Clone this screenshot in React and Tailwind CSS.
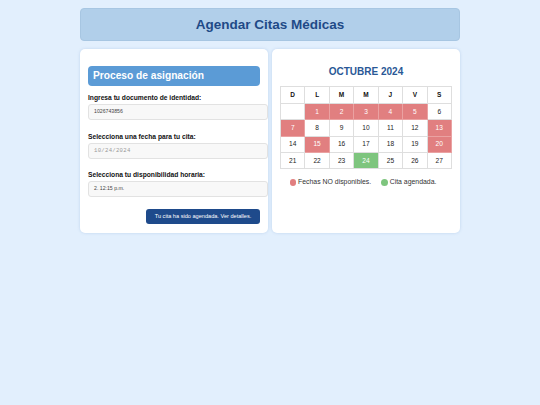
import React from 'react';

const dias = ['D', 'L', 'M', 'M', 'J', 'V', 'S'];

const semanas = [
	['', 1, 2, 3, 4, 5, 6],
	[7, 8, 9, 10, 11, 12, 13],
	[14, 15, 16, 17, 18, 19, 20],
	[21, 22, 23, 24, 25, 26, 27],
];

const noDisponibles = [1, 2, 3, 4, 5, 7, 13, 15, 20];
const agendada = 24;

function Campo({ label, value, mono, muted, className = '' }) {
	return (
		<div className={className}>
			<label className="block text-[6.7px] leading-[8px] font-bold text-[#111]">
				{label}
			</label>
			<div
				className={`mt-[2px] h-[16px] w-[180px] flex items-center pl-[5px] bg-[#f8f8f8] border border-[#e2e2e2] rounded-[3px] ${
					mono
						? "font-['Liberation_Mono',monospace] text-[5.6px] tracking-[0.3px]"
						: 'text-[5.2px]'
				} ${muted ? 'text-[#9a9a9a]' : 'text-[#444]'}`}>
				{value}
			</div>
		</div>
	);
}

export default function App() {
	return (
		<div className="min-h-[405px] bg-[#e2effd] font-['Liberation_Sans',Arial,sans-serif] pt-2">
			<div className="w-[380px] mx-auto">
				{/* Header */}
				<div className="h-[33px] rounded-[4px] bg-[#b1cfea] border border-[#a7c6e2] flex items-center justify-center pt-[2px]">
					<h1 className="text-[13.5px] font-bold text-[#1f4a87]">
						Agendar Citas Médicas
					</h1>
				</div>

				<div className="mt-2 flex gap-[4px]">
					{/* Formulario */}
					<div className="w-[188px] h-[184px] bg-white rounded-[5px] shadow-[0_0_3px_rgba(120,160,210,0.35)] pt-[17px] px-2 flex flex-col">
						<div className="h-[20px] rounded-[4px] bg-[#5b9bd6] flex items-center pl-[5px]">
							<span className="text-[10.2px] font-bold text-white">
								Proceso de asignación
							</span>
						</div>
						<Campo
							className="mt-[8px]"
							label="Ingresa tu documento de identidad:"
							value="1026743856"
						/>
						<Campo
							className="mt-[13px]"
							label="Selecciona una fecha para tu cita:"
							value="10/24/2024"
							mono
							muted
						/>
						<Campo
							className="mt-[12px]"
							label="Selecciona tu disponibilidad horaria:"
							value="2. 12:15 p.m."
						/>
						<button className="mt-[12px] self-end h-[15px] w-[114px] rounded-[3px] bg-[#1e4a8b] text-white text-[5.6px] flex items-center justify-center">
							Tu cita ha sido agendada. Ver detalles.
						</button>
					</div>

					{/* Calendario */}
					<div className="w-[188px] h-[184px] bg-white rounded-[5px] shadow-[0_0_3px_rgba(120,160,210,0.35)] pt-[17px] px-2">
						<h2 className="text-center text-[10px] leading-[12px] font-bold text-[#2a5896]">
							OCTUBRE 2024
						</h2>
						<div className="mt-[8px] grid grid-cols-7 border-t border-l border-[#dedede]">
							{dias.map((d, i) => (
								<div
									key={i}
									className="h-[17px] border-r border-b border-[#dedede] flex items-center justify-center text-[6.5px] font-bold text-[#111]">
									{d}
								</div>
							))}
							{semanas.flat().map((n, i) => {
								const rojo = noDisponibles.includes(n);
								const verde = n === agendada;
								return (
									<div
										key={i}
										className={`h-[16.3px] border-r border-b flex items-center justify-center text-[6.6px] ${
											rojo
												? 'bg-[#e17f80] text-white border-[#eaa2a2]'
												: verde
												? 'bg-[#7ec57e] text-white border-[#dedede]'
												: 'text-[#222] border-[#dedede]'
										}`}>
										{n}
									</div>
								);
							})}
						</div>
						<div className="mt-[8px] flex items-center justify-center gap-[10px] text-[6.9px] text-[#333] pr-[6px]">
							<div className="flex items-center gap-[2px]">
								<span className="w-[6.5px] h-[6.5px] rounded-full bg-[#e17f80]" />
								<span>Fechas NO disponibles.</span>
							</div>
							<div className="flex items-center gap-[2px]">
								<span className="w-[6.5px] h-[6.5px] rounded-full bg-[#7ec57e]" />
								<span>Cita agendada.</span>
							</div>
						</div>
					</div>
				</div>
			</div>
		</div>
	);
}
